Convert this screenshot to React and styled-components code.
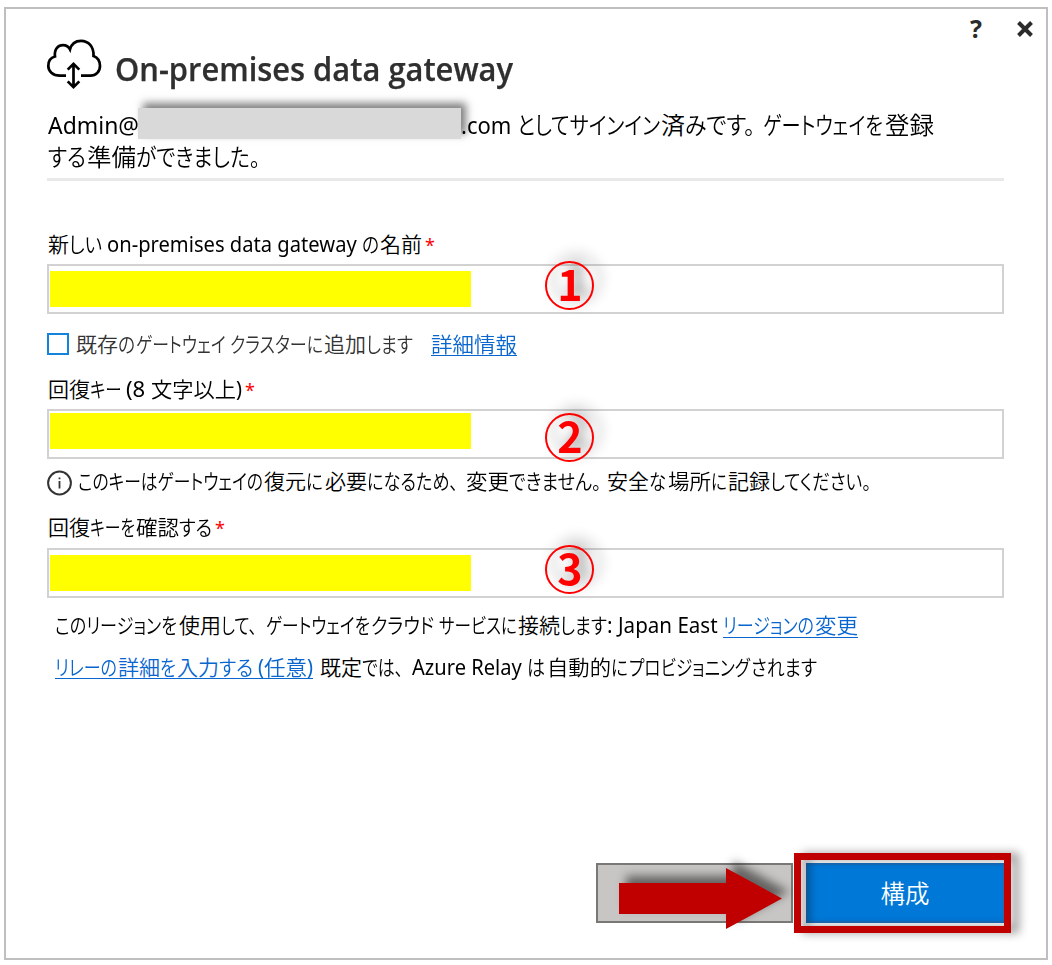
import React, { useLayoutEffect, useRef, useState } from "react";
import styled, { createGlobalStyle } from "styled-components";

const GlobalStyle = createGlobalStyle`
  * { box-sizing: border-box; }
  body {
    margin: 0;
    background: #fff;
    font-family: "Noto Sans", "Noto Sans CJK JP", sans-serif;
    color: #000;
  }
`;

const Page = styled.div`
  width: 1052px;
  height: 965px;
  padding: 7px 4px 5px 4px;
  overflow: hidden;
`;

const Dialog = styled.main`
  display: flex;
  flex-direction: column;
  width: 1044px;
  height: 953px;
  border: 2px solid #bfbfbf;
  padding: 0 42px 35px 41px;
  background: #fff;
`;

const TitleBar = styled.div`
  display: flex;
  justify-content: flex-end;
  align-items: center;
  gap: 33px;
  height: 29px;
  margin-right: -29px;
  padding-top: 10px;
`;

const IconButton = styled.button`
  display: flex;
  align-items: center;
  justify-content: center;
  width: 16px;
  height: 22px;
  padding: 0;
  border: 0;
  background: none;
  color: #2b2b2b;
  font: 700 25px/22px "Noto Sans", sans-serif;
`;

const HelpButton = styled(IconButton)`
  padding-bottom: 2px;
`;

const Brand = styled.header`
  display: flex;
  align-items: flex-start;
  gap: 13px;
  height: 52px;
  margin-left: -1px;
`;

const Title = styled.h1`
  margin: 9px 0 0;
  font: 600 32px/44px "Open Sans", "Noto Sans", sans-serif;
  color: #2f2f2f;
  -webkit-text-stroke: 0.25px #2f2f2f;
`;

const Message = styled.section`
  margin-top: 18px;
  padding: 0 0 6px 1px;
  border-bottom: 3px solid #e9e9e9;
  font-size: 24px;
`;

const Line = styled.div`
  display: flex;
  align-items: baseline;
  height: 32px;
  line-height: ${(p) => p.$leading || 32}px;
  white-space: pre;
  font-feature-settings: "palt";
`;

const Redacted = styled.span`
  align-self: flex-start;
  width: 323px;
  height: 31px;
  margin-left: -1px;
  background: #d9d9d9;
  box-shadow: 5px -5px 8px rgba(0, 0, 0, 0.5);
`;

const Form = styled.form`
  display: flex;
  flex-direction: column;
  margin-top: 47px;
  font-size: 21px;
`;

const FormLine = styled(Line)`
  margin-top: ${(p) => p.$top || 0}px;
  padding-left: ${(p) => p.$indent || 1}px;
  color: ${(p) => p.$color || "#000"};
`;

const Required = styled.span`
  margin-left: 3px;
  color: #f00;
  font-size: 18px;
`;

const Field = styled.div`
  display: flex;
  align-items: flex-start;
  height: 50px;
  margin-top: ${(p) => p.$top}px;
  border: 2px solid #d2d2d2;
  padding: ${(p) => p.$inset}px 0 0 1px;
`;

const Mask = styled.span`
  width: 421px;
  height: 36px;
  background: #ffff00;
`;

const Step = styled.span`
  display: flex;
  align-items: center;
  justify-content: center;
  flex: none;
  width: 49px;
  height: 49px;
  margin: ${(p) => p.$shift}px 0 0 74px;
  padding: 0 0 8px 1px;
  border: 2px solid #f00;
  border-radius: 50%;
  color: #f00;
  font: 700 43px/44px "Noto Sans CJK JP", sans-serif;
  filter: drop-shadow(7px -7px 6px rgba(0, 0, 0, 0.4));
`;

const Checkbox = styled.span`
  align-self: center;
  width: 22px;
  height: 22px;
  margin: 0 7px 0 -1px;
  border: 2px solid #1483dc;
`;

const Link = styled.a`
  display: inline-flex;
  align-items: baseline;
  align-self: flex-start;
  height: 28px;
  color: #0a66cf;
  border-bottom: 1px solid #0a66cf;
  margin-right: ${(p) => p.$gap || 0}px;
  margin-left: ${(p) => p.$before || 0}px;
`;

const Footer = styled.footer`
  position: relative;
  display: flex;
  justify-content: flex-end;
  gap: 13px;
  margin-top: auto;
`;

const Button = styled.button`
  width: ${(p) => (p.$primary ? 198 : 197)}px;
  height: 60px;
  padding: 0 0 1px;
  border: 2px solid ${(p) => (p.$primary ? "#1a6fbe" : "#7a7876")};
  background: ${(p) => (p.$primary ? "#0078d7" : "#c8c6c4")};
  color: #fff;
  font: 350 24.5px/36px "Noto Sans CJK JP", sans-serif;
`;

const ArrowOverlay = styled.svg`
  position: absolute;
  left: 572px;
  top: 5px;
  overflow: visible;
  filter: drop-shadow(7px -7px 5px rgba(0, 0, 0, 0.5));
`;

const Highlight = styled.span`
  position: absolute;
  right: -7px;
  top: -10px;
  width: 217px;
  height: 80px;
  border: 7px solid #c00000;
  filter: drop-shadow(8px 0 5px rgba(0, 0, 0, 0.4));
`;

const RunBox = styled.span`
  display: inline-block;
  flex: none;
  width: ${(p) => p.$w}px;
  margin-right: ${(p) => p.$after}px;
  white-space: pre;
`;

const RunText = styled.span`
  display: inline-block;
  font-weight: ${(p) => (p.$cjk ? 350 : "inherit")};
  transform-origin: 0 50%;
`;

/* A stretch of text condensed or widened to a set advance width. */
function Run({ w, after = 0, children }) {
  const ref = useRef(null);
  const [scale, setScale] = useState(1);
  useLayoutEffect(() => {
    if (ref.current && ref.current.offsetWidth) {
      setScale(w / ref.current.getBoundingClientRect().width);
    }
  }, []);
  return (
    <RunBox $w={w} $after={after}>
      <RunText ref={ref} $cjk={/[^\x00-\x7f]/.test(children)} style={{ transform: `scaleX(${scale})` }}>
        {children}
      </RunText>
    </RunBox>
  );
}

const Runs = ({ items }) =>
  items.map(([text, w, after], i) => <Run key={i} w={w} after={after}>{text}</Run>);

const CloudIcon = () => (
  <svg width="56" height="52" viewBox="46 38 56 52" fill="none" stroke="#000" strokeWidth="2.7">
    <path d="M66 75.7H60C52.5 75.7 48.3 71 48.3 66C48.3 61 51 57.5 55 56.5C54 48.5 58.5 45.2 63 45.2C66 45.2 68.5 46.5 70 49.5C71.5 43.5 76 40.8 81 40.8C88.5 40.8 94 46.5 93.5 56C97.5 57.5 100 61.5 100 66C100 71.5 96 75.7 90.5 75.7H81" />
    <path d="M73.5 64.5V86.5M67.7 69.6L73.5 63.8L79.3 69.6M67.7 81.4L73.5 87.2L79.3 81.4" />
  </svg>
);

const CloseIcon = () => (
  <svg width="16" height="16" viewBox="0 0 16 16" stroke="#2b2b2b" strokeWidth="4">
    <path d="M1.5 1.5L14.5 14.5M14.5 1.5L1.5 14.5" />
  </svg>
);

const InfoBadge = styled.svg`
  align-self: center;
  margin: 4px 6px 0 -2px;
`;

const InfoIcon = () => (
  <InfoBadge width="26" height="26" viewBox="0 0 26 26" fill="none" stroke="#333">
    <circle cx="13.5" cy="13" r="11.4" strokeWidth="2" />
    <path d="M13.5 11V18.5M13.5 7.5V9.3" strokeWidth="1.8" />
  </InfoBadge>
);

export default function App() {
  return (
    <Page>
      <GlobalStyle />
      <Dialog>
        <TitleBar>
          <HelpButton>?</HelpButton>
          <IconButton><CloseIcon /></IconButton>
        </TitleBar>
        <Brand>
          <CloudIcon />
          <Title><Run w={398}>On-premises data gateway</Run></Title>
        </Brand>
        <Message>
          <Line $leading={34}>
            <Run w={91}>Admin@</Run>
            <Redacted />
            <Runs items={[[".com ", 56], ["としてサインイン", 143, 1], ["済", 24], ["みです。", 70, 8], ["ゲートウェイを", 120, 2], ["登録", 49]]} />
          </Line>
          <Line $leading={34}>
            <Runs items={[["する", 38, 1], ["準備", 49], ["ができました。", 124]]} />
          </Line>
        </Message>
        <Form>
          <FormLine>
            <Runs items={[["新", 21], ["しい ", 38], ["on-premises data gateway ", 255], ["の", 17, 1], ["名前", 42]]} />
            <Required>*</Required>
          </FormLine>
          <Field $top={4} $inset={5}><Mask /><Step $shift={-10}>1</Step></Field>

          <FormLine $top={14} $color="#333">
            <Checkbox />
            <Runs items={[["既存", 42], ["の", 17, 1], ["ゲートウェイ ", 94], ["クラスターに", 93, 1], ["追加", 42], ["します", 47]]} />
            <Link $before={18}><Run w={86}>詳細情報</Run></Link>
          </FormLine>

          <FormLine $top={14} $leading={31}>
            <Runs items={[["回復", 42], ["キー ", 36], ["(8 ", 25], ["文字以上", 85], [")", 6]]} />
            <Required>*</Required>
          </FormLine>
          <Field $top={3} $inset={2}><Mask /><Step $shift={0}>2</Step></Field>

          <FormLine $top={6} $leading={32}>
            <InfoIcon />
            <Runs items={[["このキーはゲートウェイの", 185, 1], ["復元", 42], ["に", 17, 2], ["必要", 42], ["になるため、", 91, 8], ["変更", 43], ["できません。", 92, 6], ["安全", 42], ["な", 17, 2], ["場所", 43], ["に", 16, 1], ["記録", 42], ["してください。", 101]]} />
          </FormLine>

          <FormLine $top={15} $leading={31}>
            <Runs items={[["回復", 42], ["キーを", 45, 1], ["確認", 43], ["する", 33]]} />
            <Required>*</Required>
          </FormLine>
          <Field $top={4} $inset={5}><Mask /><Step $shift={-10}>3</Step></Field>

          <FormLine $top={12} $indent={8} $leading={31}>
            <Runs items={[["このリージョンを", 122, 2], ["使用", 42], ["して、", 36, 9], ["ゲートウェイを", 104, 1], ["クラウド ", 68], ["サービスに", 78, 1], ["接続", 42], ["します", 47], [": ", 11], ["Japan East ", 105]]} />
            <Link><Runs items={[["リージョンの", 91, 1], ["変更", 43]]} /></Link>
          </FormLine>
          <FormLine $top={9} $indent={8}>
            <Link $gap={7}>
              <Runs items={[["リレーの", 62, 1], ["詳細", 42], ["を", 16, 1], ["入力", 42], ["する ", 39], ["(", 6], ["任意", 43], [")", 6]]} />
            </Link>
            <Runs items={[["既定", 42], ["では、", 41, 9], ["Azure Relay ", 115], ["は", 18, 2], ["自動的", 64], ["に", 17, 1], ["プロビジョニング", 121, 1], ["されます", 66]]} />
          </FormLine>
        </Form>
        <Footer>
          <Button aria-label="cancel" />
          <Button $primary>構成</Button>
          <ArrowOverlay width="163" height="61" viewBox="0 0 163 61">
            <path d="M0 15H107V0L163 30.5L107 61V46H0Z" fill="#c00000" />
          </ArrowOverlay>
          <Highlight />
        </Footer>
      </Dialog>
    </Page>
  );
}
